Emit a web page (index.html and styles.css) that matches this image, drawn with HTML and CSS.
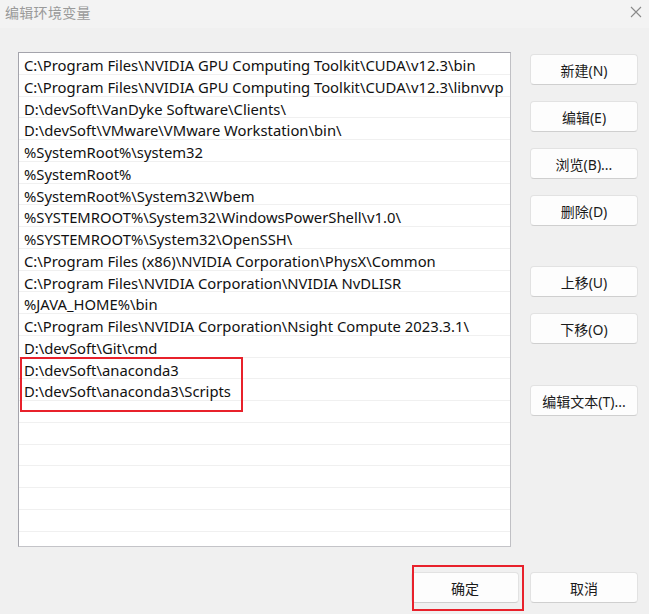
FILE: index.html
```html
<!DOCTYPE html>
<html lang="zh-CN">
<head>
<meta charset="utf-8">
<title>编辑环境变量</title>
<link rel="stylesheet" href="styles.css">
</head>
<body>
<div class="dialog">
  <div class="titlebar">
    <span class="title">编辑环境变量</span>
    <svg class="close" width="12" height="12" viewBox="0 0 12 12"><path d="M1 1 L11 11 M11 1 L1 11" stroke="#8a8a8a" stroke-width="1.1" fill="none"/></svg>
  </div>
  <div class="main">
    <div class="list">
      <div class="row">C:\Program Files\NVIDIA GPU Computing Toolkit\CUDA\v12.3\bin</div>
      <div class="row">C:\Program Files\NVIDIA GPU Computing Toolkit\CUDA\v12.3\libnvvp</div>
      <div class="row">D:\devSoft\VanDyke Software\Clients\</div>
      <div class="row">D:\devSoft\VMware\VMware Workstation\bin\</div>
      <div class="row">%SystemRoot%\system32</div>
      <div class="row">%SystemRoot%</div>
      <div class="row">%SystemRoot%\System32\Wbem</div>
      <div class="row">%SYSTEMROOT%\System32\WindowsPowerShell\v1.0\</div>
      <div class="row">%SYSTEMROOT%\System32\OpenSSH\</div>
      <div class="row">C:\Program Files (x86)\NVIDIA Corporation\PhysX\Common</div>
      <div class="row">C:\Program Files\NVIDIA Corporation\NVIDIA NvDLISR</div>
      <div class="row">%JAVA_HOME%\bin</div>
      <div class="row">C:\Program Files\NVIDIA Corporation\Nsight Compute 2023.3.1\</div>
      <div class="row">D:\devSoft\Git\cmd</div>
      <div class="row">D:\devSoft\anaconda3</div>
      <div class="row">D:\devSoft\anaconda3\Scripts</div>
      <div class="row"></div>
      <div class="row"></div>
      <div class="row"></div>
      <div class="row"></div>
      <div class="row"></div>
      <div class="row"></div>
      <div class="row"></div>
      <div class="mark mark-list"></div>
    </div>
    <div class="side">
      <button class="btn">新建(N)</button>
      <button class="btn">编辑(E)</button>
      <button class="btn">浏览(B)...</button>
      <button class="btn">删除(D)</button>
      <button class="btn group">上移(U)</button>
      <button class="btn">下移(O)</button>
      <button class="btn group2">编辑文本(T)...</button>
    </div>
  </div>
  <div class="footer">
    <div class="ok-wrap">
      <button class="btn">确定</button>
      <div class="mark mark-ok"></div>
    </div>
    <button class="btn">取消</button>
  </div>
</div>
</body>
</html>
```

FILE: styles.css
```css
* { box-sizing: border-box; }
html, body {
  margin: 0;
  padding: 0;
  background: #f0f0f0;
}
body {
  font-family: "Noto Sans", "Noto Sans CJK SC", sans-serif;
  font-size: 14px;
  color: #1b1b1b;
}
.dialog {
  width: 649px;
  height: 614px;
  display: flex;
  flex-direction: column;
  overflow: hidden;
}
.titlebar {
  height: 28px;
  background: #f3f3f3;
  display: flex;
  align-items: center;
  justify-content: space-between;
  padding: 0 7px 4px 5px;
}
.title {
  color: #9a9a9a;
  font-size: 14px;
  letter-spacing: 0.3px;
}
.close { display: block; }
.main {
  display: flex;
  padding: 24px 11px 0 18px;
  gap: 19px;
}
.list {
  position: relative;
  width: 493px;
  height: 495px;
  background: #ffffff;
  border: 1px solid #a4a4ac;
  border-bottom-color: #c4c4c8;
  border-right-color: #c0c0c4;
  overflow: hidden;
}
.row {
  height: 21.75px;
  line-height: 20px;
  padding: 2px 0 0 5px;
  border-bottom: 1px solid #f0f0f0;
  white-space: nowrap;
  font-size: 14.8px;
  color: #111;
}
.mark {
  position: absolute;
  border: 2px solid #e8212b;
  pointer-events: none;
}
.mark-list {
  left: 1px;
  top: 304px;
  width: 223px;
  height: 55px;
}
.side {
  width: 108px;
  display: flex;
  flex-direction: column;
  gap: 16px;
  padding-top: 2px;
}
.btn {
  width: 108px;
  height: 31px;
  background: #fdfdfd;
  border: 1px solid #e2e2e2;
  border-bottom-color: #cfcfcf;
  border-radius: 4px;
  font-family: "Noto Sans", "Noto Sans CJK SC", sans-serif;
  font-size: 14px;
  color: #1b1b1b;
  padding: 0;
}
.group { margin-top: 24px; }
.group2 { margin-top: 25px; }
.footer {
  display: flex;
  justify-content: flex-end;
  gap: 11px;
  padding: 25px 11px 0 0;
}
.ok-wrap { position: relative; }
.ok-wrap .btn { display: block; }
.mark-ok {
  left: 1px;
  top: -7px;
  width: 112px;
  height: 46px;
}
```
